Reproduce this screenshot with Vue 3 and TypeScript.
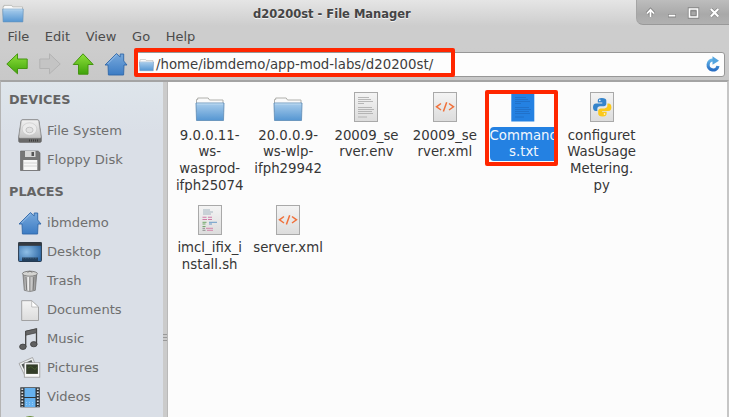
<script setup lang="ts">
interface Place {
  icon: string
  label: string
}
interface FileItem {
  icon: string
  lines: string[]
  selected?: boolean
}

const menus: string[] = ['File', 'Edit', 'View', 'Go', 'Help']

const devices: Place[] = [
  { icon: 'drive', label: 'File System' },
  { icon: 'floppy', label: 'Floppy Disk' },
]

const places: Place[] = [
  { icon: 'home', label: 'ibmdemo' },
  { icon: 'desktop', label: 'Desktop' },
  { icon: 'trash', label: 'Trash' },
  { icon: 'document', label: 'Documents' },
  { icon: 'music', label: 'Music' },
  { icon: 'pictures', label: 'Pictures' },
  { icon: 'videos', label: 'Videos' },
  { icon: 'downloads', label: '' },
]

const files: FileItem[] = [
  { icon: 'folder', lines: ['9.0.0.11-', 'ws-', 'wasprod-', 'ifph25074'] },
  { icon: 'folder', lines: ['20.0.0.9-', 'ws-wlp-', 'ifph29942'] },
  { icon: 'text', lines: ['20009_se', 'rver.env'] },
  { icon: 'xml', lines: ['20009_se', 'rver.xml'] },
  { icon: 'text-selected', lines: ['Command', 's.txt'], selected: true },
  { icon: 'python', lines: ['configuret', 'WasUsage', 'Metering.', 'py'] },
  { icon: 'script', lines: ['imcl_ifix_i', 'nstall.sh'] },
  { icon: 'xml', lines: ['server.xml'] },
]
</script>

<template>
  <div class="window">
    <svg class="defs" aria-hidden="true">
      <defs>
        <linearGradient id="g-blue" x1="0" y1="0" x2="0" y2="1">
          <stop offset="0" stop-color="#a9cdec" />
          <stop offset="1" stop-color="#5596d2" />
        </linearGradient>
        <linearGradient id="g-home" x1="0" y1="0" x2="0" y2="1">
          <stop offset="0" stop-color="#78a9dc" />
          <stop offset="1" stop-color="#3c7cc4" />
        </linearGradient>
        <linearGradient id="g-green" x1="0" y1="0" x2="0" y2="1">
          <stop offset="0" stop-color="#8fe03c" />
          <stop offset="1" stop-color="#3fa30a" />
        </linearGradient>
        <linearGradient id="g-green-side" x1="0" y1="0" x2="1" y2="0">
          <stop offset="0" stop-color="#8fe03c" />
          <stop offset="1" stop-color="#3fa30a" />
        </linearGradient>
        <linearGradient id="g-page" x1="0" y1="0" x2="0" y2="1">
          <stop offset="0" stop-color="#f4f4f4" />
          <stop offset="1" stop-color="#dcdcdc" />
        </linearGradient>
        <linearGradient id="g-metal" x1="0" y1="0" x2="1" y2="0">
          <stop offset="0" stop-color="#8d8d8d" />
          <stop offset="0.4" stop-color="#eeeeee" />
          <stop offset="1" stop-color="#858585" />
        </linearGradient>
        <linearGradient id="g-drive" x1="0" y1="0" x2="0" y2="1">
          <stop offset="0" stop-color="#f2f2f2" />
          <stop offset="1" stop-color="#c4c4c4" />
        </linearGradient>
        <linearGradient id="g-refresh" x1="0" y1="0" x2="0" y2="1">
          <stop offset="0" stop-color="#62b4e8" />
          <stop offset="1" stop-color="#2a6fc4" />
        </linearGradient>
        <radialGradient id="g-desk" cx="0.35" cy="0.5" r="0.7">
          <stop offset="0" stop-color="#8fbfe6" />
          <stop offset="1" stop-color="#2d68a6" />
        </radialGradient>
      </defs>

      <symbol id="folder" viewBox="0 0 30 30">
        <path d="M1.500 20V7.500h1.200V6h10.500l1.300 2h13.500V20z" fill="#fafafa" stroke="#a8a8a4" stroke-width=".9" />
        <path d="M1 11h28l-.5 17.500h-27z" fill="url(#g-blue)" stroke="#6792ba" stroke-width=".9" />
        <path d="M2 12h26" stroke="#c6dff3" stroke-width=".8" />
      </symbol>

      <symbol id="text" viewBox="0 0 30 30">
        <rect x="3.500" y=".5" width="23" height="29" fill="url(#g-page)" stroke="#a9a9a9" />
        <path d="M7 5.500h11M7 7.500h13M7 9.500h15M7 11.500h6M7 15.500h14M7 17.500h16M7 19.500h14M7 21.500h15M7 25h9" stroke="#a8a8a8" stroke-width=".8" />
      </symbol>

      <symbol id="text-selected" viewBox="0 0 30 30">
        <rect x="3.300" y=".5" width="23" height="29" fill="#2481e2" />
        <path d="M7 5.500h11M7 7.500h13M7 9.500h15M7 11.500h6M7 15.500h14M7 17.500h16M7 19.500h14M7 21.500h15M7 25h9" stroke="#1f6dc4" stroke-width=".8" />
      </symbol>

      <symbol id="xml" viewBox="0 0 30 30">
        <rect x="3.500" y=".5" width="23" height="29" fill="url(#g-page)" stroke="#a9a9a9" />
        <path d="M11 11.500l-4.500 3.300L11 18M19 11.500l4.500 3.300L19 18M16.700 10.200l-3.300 9.300" fill="none" stroke="#f0703a" stroke-width="1.500" />
      </symbol>

      <symbol id="python" viewBox="0 0 30 30">
        <rect x="3.500" y=".5" width="23" height="29" fill="url(#g-page)" stroke="#a9a9a9" />
        <path d="M14.800 6c-3 0-4 1-4 2.600v2h4.500v.8H9c-2 0-3 1.500-3 3.800s1 3.800 2.800 3.800h1.500V17c0-1.800 1.200-2.800 2.800-2.800h3.700c1.500 0 2.500-1 2.500-2.500V8.600C19.300 7 17.800 6 14.800 6z" fill="#3584cb" />
        <path d="M15.600 24.400c3 0 4-1 4-2.600v-2h-4.500v-.8h6.300c2 0 3-1.500 3-3.800s-1-3.800-2.800-3.800h-1.200v2.200c0 1.800-1.300 2.800-2.800 2.800h-3.700c-1.500 0-2.700 1-2.700 2.500v2.900c0 1.600 1.400 2.600 4.400 2.600z" fill="#fbc91b" />
        <circle cx="12.800" cy="8.400" r=".8" fill="#fff" />
        <circle cx="17.500" cy="22" r=".8" fill="#fff" />
      </symbol>

      <symbol id="script" viewBox="0 0 30 30">
        <rect x="3.500" y=".5" width="23" height="29" fill="url(#g-page)" stroke="#a9a9a9" />
        <path d="M8 5h7M8 7h10M8 9h8" stroke="#a3b4bf" />
        <path d="M7.500 12.300h4M13 12.300h4M7.500 14.500h4.500M13 14.500h4" stroke="#cf7ba8" stroke-width="1.100" />
        <path d="M7.500 17.300h4M7.500 19h3M7.500 21.500h3" stroke="#74a96b" />
        <path d="M14 17.300h8M14 19h3" stroke="#6a9bc9" />
        <path d="M11 23.300h7M12 25.300h6" stroke="#d486ac" />
        <path d="M7.500 23.300h2.500M7.500 25.300h3" stroke="#777" stroke-width=".8" />
      </symbol>

      <symbol id="home" viewBox="0 0 24 24">
        <path d="M12.500 1.500L1 13h3l.4 10h15.200l.4-10h3L19.700 9V2h-3.500v3z" fill="url(#g-home)" stroke="#3068a8" stroke-width=".9" stroke-linejoin="round" />
        <path d="M12.500 3L3.500 12" stroke="#a2c5eb" stroke-width=".8" />
      </symbol>

      <symbol id="drive" viewBox="0 0 24 24">
        <path d="M.6 18L3 2q.3-1.300 1.500-1.300h15Q20.700.7 21 2l2.400 16v4q0 1.400-1.400 1.400H2Q.6 23.400.6 22z" fill="#6a6a6a" stroke="#666" stroke-width=".6" />
        <path d="M1 18L3.300 2.200Q3.500 1 4.700 1h14.600q1.200 0 1.400 1.200L23 18q0 1-1.200 1H2.200Q1 19 1 18z" fill="url(#g-drive)" stroke="#aaa" stroke-width=".6" />
        <ellipse cx="11.500" cy="10" rx="7.300" ry="6.200" fill="#ececec" stroke="#c4c4c4" stroke-width=".6" />
        <ellipse cx="11.500" cy="11" rx="3.600" ry="2.800" fill="#e2e2e2" stroke="#b5b5b5" stroke-width=".7" />
        <path d="M11.500 20.500v2M13.500 20.500v2M15.500 20.500v2M17.500 20.500v2M19.500 20.500v2" stroke="#3d3d3d" />
      </symbol>

      <symbol id="floppy" viewBox="0 0 24 24">
        <path d="M2.500 3h17.700L22 4.800V22.500H2.500z" fill="#767676" stroke="#696969" stroke-width=".7" />
        <path d="M7 3h10.500v6H7z" fill="#d6d6d6" />
        <path d="M13.500 4h2.500v4h-2.500z" fill="#555" />
        <path d="M5.300 12h14v10h-14z" fill="#f7f7f7" />
        <path d="M5.300 15h14M5.300 18h14" stroke="#ccc" stroke-width=".8" />
      </symbol>

      <symbol id="desktop" viewBox="0 0 24 24">
        <rect x=".6" y="2.500" width="22.800" height="19" rx=".8" fill="url(#g-desk)" stroke="#26384d" />
        <path d="M.3 2.300h23.400v3.500H.3z" fill="#353a40" />
        <path d="M4 17.500h16v3.800H4z" fill="#23415f" />
        <path d="M4.500 18h15" stroke="#507494" stroke-width=".7" stroke-dasharray="1.500 1" />
      </symbol>

      <symbol id="trash" viewBox="0 0 24 24">
        <path d="M5 5.500l1.300 15.800q5.500 2.500 11 0L18.700 5.500z" fill="url(#g-metal)" stroke="#777" stroke-width=".8" />
        <path d="M8 8l.7 13M11.900 8v14M15.800 8l-.7 13" stroke="#777" />
        <ellipse cx="11.900" cy="4.700" rx="7.500" ry="2.500" fill="#d4d4d2" stroke="#777" stroke-width=".9" />
        <path d="M9.500 3.300q2.400-2.200 4.800 0" fill="none" stroke="#777" />
      </symbol>

      <symbol id="document" viewBox="0 0 24 24">
        <path d="M3.700 2.700h10L20.500 9v13.500H3.700z" fill="url(#g-page)" stroke="#929292" stroke-width=".8" />
        <path d="M13.700 2.700L20.500 9h-6.800z" fill="#fff" stroke="#aaa" stroke-width=".7" />
      </symbol>

      <symbol id="music" viewBox="0 0 24 24">
        <path d="M7.700 20V4.500L18.500 2v15.500" fill="none" stroke="#484848" stroke-width="1.300" />
        <path d="M7.700 4.200L18.500 1.700v4L7.700 8.200z" fill="#666" stroke="#484848" stroke-width=".8" />
        <ellipse cx="4.900" cy="19.800" rx="3.300" ry="2.700" fill="#606060" stroke="#3e3e3e" stroke-width=".8" />
        <ellipse cx="15.800" cy="17.200" rx="3.300" ry="2.600" fill="#606060" stroke="#3e3e3e" stroke-width=".8" />
      </symbol>

      <symbol id="pictures" viewBox="0 0 24 24">
        <path d="M1 7.500L14.500 1.500 20 15 7 20z" fill="#eceeee" stroke="#999" stroke-width=".8" />
        <path d="M3.500 8.500L13.500 4l3 8-9 4z" fill="#4d5350" />
        <rect x="6.300" y="6.700" width="15.500" height="14.500" fill="#f8f8f8" stroke="#999" stroke-width=".8" />
        <rect x="8.200" y="8.400" width="11.700" height="9.500" fill="#333d28" />
        <path d="M10 12q3-3 5 0t4-1" stroke="#4a6330" fill="none" stroke-width=".8" />
      </symbol>

      <symbol id="videos" viewBox="0 0 24 24">
        <rect x="2.300" y="2.300" width="19.500" height="20" fill="#303437" />
        <path d="M6.500 3h11v9h-11zM6.500 13h11v9h-11z" fill="#66b1ee" />
        <path d="M4.300 3.400v18.500M19.800 3.400v18.500" stroke="#dce0e4" stroke-width="1.800" stroke-dasharray="1.500 1.500" />
        <path d="M8 17.500h8M8 19.500h8" stroke="#acd9fb" stroke-width=".7" stroke-dasharray="1 2" />
      </symbol>

      <symbol id="downloads" viewBox="0 0 24 24">
        <circle cx="12" cy="12.500" r="10" fill="#8cad5b" stroke="#6c903d" />
      </symbol>

      <symbol id="left-arrow" viewBox="0 0 22 22">
        <path d="M.8 11L11.500.8V6h9.700v9.500h-9.700v5.300z" />
      </symbol>
    </svg>

    <header class="titlebar">
      <svg class="app-icon"><use href="#folder" /></svg>
      <h1 class="title">d20200st - File Manager</h1>
      <div class="controls">
        <svg viewBox="0 0 92 25">
          <g fill="none" stroke="#858585" stroke-width="3.400">
            <path d="M13.500 17V11M10 13.500l3.500-3.700 3.500 3.700M31 15.700h8M52.500 9h8v8h-8zM73.800 9l7.500 7.500M81.300 9l-7.500 7.500" />
          </g>
          <g fill="none" stroke="#fff" stroke-width="1.700">
            <path d="M13.500 17V10.500M10 13.500l3.500-3.700 3.500 3.700M31.700 15.700h6.600M52.500 9h8v8h-8z" />
            <path d="M73.800 9l7.500 7.500M81.300 9l-7.500 7.500" stroke-width="2.100" />
          </g>
          <path d="M54 11h5v4.500h-5z" fill="#a7a7a7" stroke="#858585" stroke-width=".8" />
        </svg>
      </div>
    </header>

    <nav class="menubar">
      <span v-for="menu in menus" :key="menu" class="menu">{{ menu }}</span>
    </nav>

    <div class="toolbar">
      <svg class="nav back"><use href="#left-arrow" /></svg>
      <svg class="nav forward"><use href="#left-arrow" /></svg>
      <svg class="nav up"><use href="#left-arrow" /></svg>
      <svg class="nav house"><use href="#home" /></svg>
      <div class="address">
        <svg class="address-folder"><use href="#folder" /></svg>
        <span class="path">/home/ibmdemo/app-mod-labs/d20200st/</span>
        <svg class="refresh" viewBox="0 0 16 16">
          <path d="M8.500 4A5 5 0 1 0 13 10" fill="none" stroke="url(#g-refresh)" stroke-width="3.200" />
          <path d="M7.500.2L14 4.700 7.500 8.700z" fill="#55a5df" />
        </svg>
        <div class="mark mark-path"></div>
      </div>
    </div>

    <div class="body">
      <aside class="sidebar">
        <h2 class="heading">DEVICES</h2>
        <div v-for="d in devices" :key="d.icon" class="place">
          <svg class="place-icon"><use :href="'#' + d.icon" /></svg>
          <span>{{ d.label }}</span>
        </div>
        <h2 class="heading second">PLACES</h2>
        <div v-for="p in places" :key="p.icon" class="place">
          <svg class="place-icon"><use :href="'#' + p.icon" /></svg>
          <span>{{ p.label }}</span>
        </div>
      </aside>
      <div class="splitter"><i></i><i></i><i></i></div>
      <main class="files">
        <div v-for="(f, i) in files" :key="i" class="file" :class="{ selected: f.selected }">
          <svg class="file-icon"><use :href="'#' + f.icon" /></svg>
          <div class="label">
            <span v-for="line in f.lines" :key="line">{{ line }}</span>
          </div>
          <div v-if="f.selected" class="mark mark-file"></div>
        </div>
      </main>
    </div>
  </div>
</template>

<style>
body {
  background: #fff;
  overflow: hidden;
}
</style>

<style scoped>
.window {
  box-sizing: border-box;
  width: 729px;
  height: 417px;
  display: flex;
  flex-direction: column;
  overflow: hidden;
  background: linear-gradient(#e5e5e5 0, #cdcdcd 26px, #cdcdcd 48px, #c8c8c8 80px);
  font-family: "DejaVu Sans", sans-serif;
  font-size: 13.1px;
  color: #4c4c4c;
}
.defs {
  position: absolute;
  width: 0;
  height: 0;
}
.titlebar {
  flex: none;
  height: 27px;
  display: flex;
  align-items: flex-start;
}
.app-icon {
  width: 22px;
  height: 22px;
  margin: 1px 0 0 2px;
}
.title {
  flex: 1;
  margin: 0 0 0 229px;
  font-size: 11.5px;
  line-height: 28px;
  font-weight: bold;
  color: #444;
  text-shadow: 0 1px 0 #f2f2f2;
  white-space: nowrap;
}
.controls {
  width: 93px;
  height: 25px;
  box-sizing: border-box;
  border-left: 1px solid #a5a5a5;
  border-bottom: 1px solid #999;
  border-bottom-left-radius: 7px;
  background: linear-gradient(#bdbdbd, #a9a9a9 60%, #b1b1b1);
}
.controls svg {
  display: block;
  width: 92px;
  height: 25px;
}
.menubar {
  flex: none;
  height: 21px;
  padding-left: 7.500px;
  display: flex;
  gap: 15.600px;
  line-height: 20px;
  font-size: 13px;
}
.toolbar {
  flex: none;
  height: 32px;
  display: flex;
  align-items: center;
  padding-left: 6px;
}
.nav {
  width: 22px;
  height: 22px;
  stroke-width: 1px;
}
.back {
  fill: url(#g-green);
  stroke: #459510;
}
.forward {
  margin-left: 11px;
  transform: scaleX(-1);
  fill: #c4c4c4;
  stroke: #b3b3b3;
}
.up {
  margin-left: 11px;
  transform: rotate(90deg);
  fill: url(#g-green-side);
  stroke: #459510;
}
.house {
  width: 24px;
  height: 24px;
  margin-left: 10px;
}
.address {
  position: relative;
  box-sizing: border-box;
  width: 590px;
  height: 25px;
  margin: 0 4px 0 7px;
  padding: 0 3px 0 3px;
  display: flex;
  align-items: center;
  background: #fdfdfd;
  border: 1px solid #979797;
  border-radius: 3px;
}
.address-folder {
  width: 15px;
  height: 16px;
}
.path {
  flex: 1;
  margin-left: 2px;
  font-size: 13.3px;
  color: #3d3d3d;
}
.refresh {
  width: 16px;
  height: 16px;
}
.mark {
  position: absolute;
  box-sizing: border-box;
  border: 4px solid #ff2600;
  border-radius: 2px;
}
.mark-path {
  left: -2px;
  top: -5px;
  width: 321px;
  height: 29px;
}
.body {
  flex: 1;
  min-height: 0;
  display: flex;
  border-top: 2px solid #a4a4a4;
  border-left: 1px solid #b5b5b5;
  border-right: 2px solid #c6c6c6;
}
.sidebar {
  width: 162px;
  overflow: hidden;
  background: linear-gradient(#dee5eb, #dadfe7 50px);
  color: #6f6f6f;
}
.heading {
  margin: 0;
  padding: 0 0 2px 8px;
  height: 31px;
  line-height: 35px;
  box-sizing: border-box;
  font-size: 12.800px;
  font-weight: bold;
  color: #646464;
}
.second {
  height: 31px;
  line-height: 36px;
}
.place {
  height: 29px;
  padding-left: 17px;
  display: flex;
  align-items: center;
  gap: 5px;
}
.heading + .place {
  margin-top: 3px;
}
.place-icon {
  width: 24px;
  height: 24px;
}
.splitter {
  width: 4px;
  border-right: 1px solid #b9b9b9;
  background: #cbcbcb;
  display: flex;
  flex-direction: column;
  justify-content: center;
  gap: 2px;
  padding-top: 176px;
}
.splitter i {
  height: 1px;
  background: #999;
}
.files {
  flex: 1;
  display: grid;
  grid-template-columns: repeat(6, 78.4px);
  grid-auto-rows: 112.5px;
  align-content: start;
  padding: 10px 0 0 2.500px;
  background: #fcfcfc;
  color: #363636;
  font-size: 13.3px;
}
.file {
  position: relative;
  display: flex;
  flex-direction: column;
  align-items: center;
}
.file-icon {
  width: 30px;
  height: 30px;
}
.label {
  display: flex;
  flex-direction: column;
  align-items: center;
  margin-top: 5.500px;
  line-height: 16.700px;
  white-space: nowrap;
}
.selected .label {
  margin: 4.500px 0 0 2px;
  padding: 1px 1px 0 0;
  background: #2481e2;
  border-radius: 4px;
  color: #f2f7fd;
  clip-path: inset(0 4px 0 0);
}
.mark-file {
  left: 1px;
  top: -2px;
  width: 73px;
  height: 76px;
}
</style>
